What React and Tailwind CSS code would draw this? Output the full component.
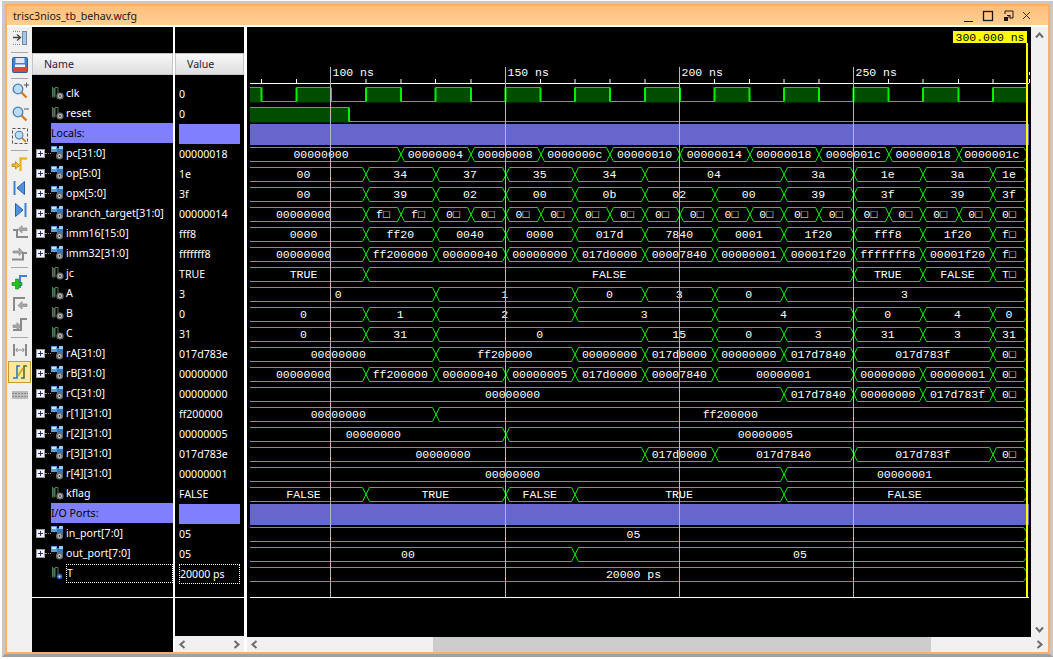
const UI = "font-['Noto_Sans',sans-serif]";
const WF = "font-['Liberation_Mono',monospace] text-[11.5px]";
const r = [296.5, 366, 435.5, 505.5, 575, 645, 714.5, 784, 853.5, 923, 993];
const F = [261.5, 331, 401, 470.5, 540.5, 610, 680, 749.5, 819, 888.5, 958.5];
const END = 1026;

const bt = [366, 401, 436, 471, 505.5, 540.5, 575, 610, 645, 680, 714.5, 749.5, 784, 819, 853.5, 888.5, 923, 958.5, 993, END];
const buses = [
  [147, [["00000000", F[2]], ["00000004", F[3]], ["00000008", F[4]], ["0000000c", F[5]], ["00000010", F[6]], ["00000014", F[7]], ["00000018", F[8]], ["0000001c", F[9]], ["00000018", F[10]], ["0000001c", END]]],
  [167, [["00", r[1]], ["34", r[2]], ["37", r[3]], ["35", r[4]], ["34", r[5]], ["04", r[7]], ["3a", r[8]], ["1e", r[9]], ["3a", r[10]], ["1e", END]]],
  [187, [["00", r[1]], ["39", r[2]], ["02", r[3]], ["00", r[4]], ["0b", r[5]], ["02", r[6]], ["00", r[7]], ["39", r[8]], ["3f", r[9]], ["39", r[10]], ["3f", END]]],
  [207, [["00000000", bt[0]], ...bt.slice(1).map((x, i) => [i < 2 ? "f□" : "0□", x])]],
  [227, [["0000", r[1]], ["ff20", r[2]], ["0040", r[3]], ["0000", r[4]], ["017d", r[5]], ["7840", r[6]], ["0001", r[7]], ["1f20", r[8]], ["fff8", r[9]], ["1f20", r[10]], ["f□", END]]],
  [247, [["00000000", r[1]], ["ff200000", r[2]], ["00000040", r[3]], ["00000000", r[4]], ["017d0000", r[5]], ["00007840", r[6]], ["00000001", r[7]], ["00001f20", r[8]], ["fffffff8", r[9]], ["00001f20", r[10]], ["f□", END]]],
  [267, [["TRUE", r[1]], ["FALSE", r[8]], ["TRUE", r[9]], ["FALSE", r[10]], ["T□", END]]],
  [287, [["0", r[2]], ["1", r[4]], ["0", r[5]], ["3", r[6]], ["0", r[7]], ["3", END]]],
  [307, [["0", r[1]], ["1", r[2]], ["2", r[4]], ["3", r[6]], ["4", r[8]], ["0", r[9]], ["4", r[10]], ["0", END]]],
  [327, [["0", r[1]], ["31", r[2]], ["0", r[5]], ["15", r[6]], ["0", r[7]], ["3", r[8]], ["31", r[9]], ["3", r[10]], ["31", END]]],
  [347, [["00000000", r[2]], ["ff200000", r[4]], ["00000000", r[5]], ["017d0000", r[6]], ["00000000", r[7]], ["017d7840", r[8]], ["017d783f", r[10]], ["0□", END]]],
  [367, [["00000000", r[1]], ["ff200000", r[2]], ["00000040", r[3]], ["00000005", r[4]], ["017d0000", r[5]], ["00007840", r[6]], ["00000001", r[8]], ["00000000", r[9]], ["00000001", r[10]], ["0□", END]]],
  [387, [["00000000", r[7]], ["017d7840", r[8]], ["00000000", r[9]], ["017d783f", r[10]], ["0□", END]]],
  [407, [["00000000", r[2]], ["ff200000", END]]],
  [427, [["00000000", r[3]], ["00000005", END]]],
  [447, [["00000000", r[5]], ["017d0000", r[6]], ["017d7840", r[8]], ["017d783f", r[10]], ["0□", END]]],
  [467, [["00000000", r[7]], ["00000001", END]]],
  [487, [["FALSE", r[1]], ["TRUE", r[3]], ["FALSE", r[4]], ["TRUE", r[7]], ["FALSE", END]]],
  [527, [["05", END]]],
  [547, [["00", r[4]], ["05", END]]],
  [567, [["20000 ps", END]]],
];

function BusRow({ y, segs }) {
  const top = y + 0.5, bot = y + 14.5;
  const lines = [];
  const labels = [];
  let a = 250, labelStart = 242;
  segs.forEach(([t, b], i) => {
    const last = i === segs.length - 1;
    const x0 = i === 0 ? 250 : Math.round(a) + 3.5;
    const x1 = Math.round(b) - 3.5 + (last ? 1 : 0);
    lines.push(`M${x0} ${top}H${x1}M${x0} ${bot}H${x1}`);
    if (last) {
      lines.push(`M${x1} ${top}L${x1 + 3} ${top + 4}V${bot - 4}L${x1} ${bot}`);
    } else {
      const c = Math.round(b);
      lines.push(`M${c - 3.5} ${top}L${c + 3.5} ${bot}M${c - 3.5} ${bot}L${c + 3.5} ${top}`);
    }
    labels.push(
      <text key={i} x={(labelStart + b) / 2 - 0.5} y={y + 11} textAnchor="middle" fill="#ffffff" className={WF}>{t}</text>
    );
    a = b; labelStart = b;
  });
  return (
    <g>
      <path d={lines.join("")} fill="none" stroke="#00e600" strokeWidth="1" />
      {labels}
    </g>
  );
}

function Bit({ hi, lo, edges, startHigh }) {
  const fills = [];
  let high = startHigh, x = 250;
  let h = "", v = "";
  edges.concat([1027]).forEach((e, i) => {
    if (high) fills.push(<rect key={i} x={x} y={hi} width={e - x} height={lo - hi + 1} fill="#004d00" />);
    h += `M${x} ${high ? hi : lo}H${e}`;
    if (e !== 1027) v += `M${e} ${hi}V${lo}`;
    high = !high; x = e;
  });
  return (
    <g>
      {fills}
      <path d={h} fill="none" stroke="#00e600" strokeWidth="1" />
      <path d={v} fill="none" stroke="#00f000" strokeWidth="2" />
    </g>
  );
}

function Wave() {
  const clkEdges = [261.5, 296.5, 331, 366, 401, 435.5, 471, 505.5, 540.5, 575, 610, 645, 680, 714.5, 749.5, 784, 819, 853.5, 888.5, 923, 958.5, 993];
  const ticks = [261.5, 296.5, 366, 401, 435.5, 471, 540.5, 575, 610, 645, 714.5, 749.5, 784, 819, 888.5, 923, 958.5, 993];
  const cursors = [[330.5, "100 ns"], [505.5, "150 ns"], [679.5, "200 ns"], [853.5, "250 ns"]];
  return (
    <svg width="784" height="610" viewBox="247 27 784 610" className="block">
      <rect x="247" y="27" width="784" height="610" fill="#000000" />
      {ticks.map((x) => <path key={x} d={`M${x} 79V83`} stroke="#ffffff" />)}
      <path d="M1029.5 72V75M1029.5 79V83" stroke="#ffffff" />
      <rect x="250" y="83" width="779" height="1" fill="#ffffff" />
      <Bit hi={87.5} lo={101.5} edges={clkEdges} startHigh={true} />
      <Bit hi={107.5} lo={121.5} edges={[349]} startHigh={true} />
      <rect x="250" y="124" width="779" height="21" fill="#6666cc" />
      <rect x="250" y="504" width="779" height="21" fill="#6666cc" />
      {buses.map(([y, segs]) => <BusRow key={y} y={y} segs={segs} />)}
      {cursors.map(([x, t]) => (
        <g key={x}>
          <text x={x + 2} y="75.5" fill="#ffffff" className={WF}>{t}</text>
          <path d={`M${x} 67V597`} stroke="#b8b8b8" />
        </g>
      ))}
      <rect x="250" y="597" width="779" height="1" fill="#ffffff" />
      <rect x="1026" y="43" width="2" height="554" fill="#ffff00" />
      <rect x="953" y="31" width="74" height="12" fill="#ffff00" />
      <text x="990" y="40.5" textAnchor="middle" fill="#000000" className={WF}>300.000 ns</text>
    </svg>
  );
}

const Gear = ({ cx = 9, cy = 10 }) => (
  <g>
    <circle cx={cx} cy={cy} r="3.600" fill="#6e6e6e" />
    <circle cx={cx} cy={cy} r="2" fill="#c8c8c8" />
    <circle cx={cx} cy={cy} r="0.900" fill="#333333" />
  </g>
);

const SignalIcon = ({ t }) => (
  <svg width="13" height="14" viewBox="0 0 13 14" className="shrink-0">
    <path d="M1.500 1v10h2.500M4 11V1.500h3v7" fill="none" stroke="#4f7f4f" strokeWidth="1" />
    <path d="M3 2v8" stroke="#9a9a9a" strokeWidth="1" />
    {t ? (
      <g><circle cx="8.500" cy="10.500" r="2.800" fill="#3566c8" /><circle cx="8.500" cy="10.500" r="1" fill="#e8f0ff" /></g>
    ) : <Gear />}
  </svg>
);

const BusIcon = () => (
  <svg width="13" height="14" viewBox="0 0 13 14" className="shrink-0">
    <rect x="0" y="0" width="6" height="6" fill="#5aa0dc" />
    <rect x="6" y="2" width="6" height="6" fill="#2f78bc" />
    <rect x="1" y="1" width="4" height="2" fill="#cfe6f9" />
    <rect x="8" y="0" width="4" height="3" fill="#9ccaf0" />
    <Gear cx={8.500} cy={10} />
  </svg>
);

const Plus = () => (
  <span className="relative flex h-[9px] w-[9px] shrink-0 items-center justify-center border border-[#9a9a9a] bg-[#f4f4f4]">
    <span className="absolute h-px w-[5px] bg-[#20307a]" />
    <span className="absolute h-[5px] w-px bg-[#20307a]" />
  </span>
);

const rows = [
  { n: "clk", v: "0" }, { n: "reset", v: "0" }, { n: "Locals:", v: "", g: 1 },
  { n: "pc[31:0]", v: "00000018", b: 1 }, { n: "op[5:0]", v: "1e", b: 1 }, { n: "opx[5:0]", v: "3f", b: 1 },
  { n: "branch_target[31:0]", v: "00000014", b: 1 }, { n: "imm16[15:0]", v: "fff8", b: 1 }, { n: "imm32[31:0]", v: "fffffff8", b: 1 },
  { n: "jc", v: "TRUE" }, { n: "A", v: "3" }, { n: "B", v: "0" }, { n: "C", v: "31" },
  { n: "rA[31:0]", v: "017d783e", b: 1 }, { n: "rB[31:0]", v: "00000000", b: 1 }, { n: "rC[31:0]", v: "00000000", b: 1 },
  { n: "r[1][31:0]", v: "ff200000", b: 1 }, { n: "r[2][31:0]", v: "00000005", b: 1 }, { n: "r[3][31:0]", v: "017d783e", b: 1 }, { n: "r[4][31:0]", v: "00000001", b: 1 },
  { n: "kflag", v: "FALSE" }, { n: "I/O Ports:", v: "", g: 1 },
  { n: "in_port[7:0]", v: "05", b: 1 }, { n: "out_port[7:0]", v: "05", b: 1 }, { n: "T", v: "20000 ps", t: 1 },
];

function NameRow({ row }) {
  if (row.g) {
    return (
      <div className="ml-[19px] flex h-[20px] items-center bg-[#8080ff] text-[#000000]">{row.n}</div>
    );
  }
  return (
    <div className="flex h-[20px] items-center text-white">
      <div className="flex w-[19px] items-center pl-[4px]">
        {row.b && <Plus />}
        {row.b && <span className="w-[6px] border-t border-dotted border-[#8a8a8a]" />}
      </div>
      {row.b ? <BusIcon /> : <SignalIcon t={row.t} />}
      <span className={row.t ? "ml-[2px] flex h-[19px] flex-1 items-center border border-dotted border-white" : "ml-[2px] flex-1"}>{row.n}</span>
    </div>
  );
}

function ValueRow({ row }) {
  if (row.g) return <div className="mx-[4px] h-[20px] bg-[#8080ff]" />;
  return (
    <div className={row.t ? "mx-[4px] flex h-[20px] items-center border border-dotted border-white text-white" : "flex h-[20px] items-center pl-[4px] text-white"}>
      {row.v}
    </div>
  );
}

const Chev = ({ d, className }) => (
  <svg width="9" height="9" viewBox="0 0 9 9" className={className}>
    <path d={d} fill="none" stroke="#6a6a6a" strokeWidth="2" />
  </svg>
);
const L = "M6.500 1L2.500 4.500L6.500 8";
const R = "M2.500 1L6.500 4.500L2.500 8";
const U = "M1 6.500L4.500 2.500L8 6.500";
const D = "M1 2.500L4.500 6.500L8 2.500";

const Sep = ({ className }) => <div className={"mx-[4px] h-px bg-[#a8a8a8] " + className} />;

const Tool = ({ children, className }) => (
  <div className={"flex items-center justify-center " + className}>
    <svg width="18" height="18" viewBox="0 0 18 18">{children}</svg>
  </div>
);

const Mag = ({ plus, minus }) => (
  <g>
    <circle cx="7" cy="7" r="4.800" fill="#b8ddf8" stroke="#4a7fb0" strokeWidth="1.300" />
    <path d="M10.500 10.500L15.500 15.500" stroke="#d87a20" strokeWidth="2.400" />
    {plus && <path d="M13 3H18M15.500 0.500V5.500" stroke="#555555" strokeWidth="1" />}
    {minus && <path d="M13 4H18" stroke="#555555" strokeWidth="1" />}
  </g>
);

function Toolbar() {
  return (
    <div className="flex w-[25px] shrink-0 flex-col bg-[#f0f0f0]">
      <Tool className="h-[22px]">
        <path d="M2 8.500H9M6 5.500L9.500 8.500L6 11.500" fill="none" stroke="#444444" strokeWidth="1.300" />
        <rect x="11.500" y="2.500" width="4" height="13" fill="#a8c8e8" stroke="#6d8aa8" />
        <path d="M2 2.500H10M2 15.500H10" stroke="#888888" strokeDasharray="1 1" />
      </Tool>
      <Sep className="mt-[3px]" />
      <Tool className="h-[22px] mt-[1px]">
        <rect x="1.500" y="1.500" width="15" height="15" rx="1" fill="#3f82cf" stroke="#2a5f9e" />
        <rect x="4.500" y="2" width="9" height="5" fill="#d8e8f8" />
        <rect x="2" y="11" width="14" height="5" fill="#d84a3a" />
        <rect x="4" y="8.500" width="10" height="2.500" fill="#f4f4f4" />
      </Tool>
      <Sep className="mt-[2px]" />
      <Tool className="h-[22px] mt-[1px]"><Mag plus /></Tool>
      <Tool className="h-[22px] mt-[1px]"><Mag minus /></Tool>
      <Tool className="h-[22px]">
        <rect x="1.500" y="1.500" width="15" height="15" fill="#eeeeee" stroke="#555555" strokeDasharray="3 2" />
        <g transform="translate(2.500 2.500) scale(.8)"><Mag /></g>
      </Tool>
      <Sep className="mt-[3px]" />
      <Tool className="h-[22px] mt-[2px]">
        <path d="M9.500 16V3.500H16" fill="none" stroke="#e8b820" strokeWidth="2.400" />
        <path d="M1 9H4.500V6.500L8.500 10.500L4.500 14V11.500H1Z" fill="#f0c020" stroke="#a07a10" strokeWidth=".7" />
      </Tool>
      <Tool className="h-[22px] mt-[2px]">
        <path d="M3.500 2V16" stroke="#3f82cf" strokeWidth="2" />
        <path d="M13.500 2.500L6 9L13.500 15.500Z" fill="#4f92df" stroke="#2a5f9e" />
      </Tool>
      <Tool className="h-[22px]">
        <path d="M14.500 2V16" stroke="#3f82cf" strokeWidth="2" />
        <path d="M4.500 2.500L12 9L4.500 15.500Z" fill="#4f92df" stroke="#2a5f9e" />
      </Tool>
      <Tool className="h-[22px]">
        <path d="M2 7H6V14H17" fill="none" stroke="#8a8a8a" strokeWidth="2" />
        <path d="M16 5H11V2.500L7 6.500L11 10V7.500H16Z" fill="#a8a8a8" stroke="#808080" strokeWidth=".6" />
      </Tool>
      <Tool className="h-[22px]">
        <path d="M1 14.500H12V8H16" fill="none" stroke="#8a8a8a" strokeWidth="2" />
        <path d="M2 6H8V3L12 7L8 10.500V8H2Z" fill="#a8a8a8" stroke="#808080" strokeWidth=".6" />
      </Tool>
      <Sep className="mt-[2px]" />
      <Tool className="h-[22px] mt-[3px]">
        <path d="M9 15V3H16" fill="none" stroke="#3f82cf" strokeWidth="2" />
        <path d="M1 9.500H4.500V6H7.500V9.500H11V12.500H7.500V16H4.500V12.500H1Z" fill="#22c020" stroke="#108010" strokeWidth=".6" />
      </Tool>
      <Tool className="h-[21px]">
        <path d="M3 16V3H14" fill="none" stroke="#8a8a8a" strokeWidth="2" />
        <path d="M16 9H11V6.500L7 10.500L11 14V11.500H16Z" fill="#a8a8a8" stroke="#808080" strokeWidth=".6" />
      </Tool>
      <Tool className="h-[22px]">
        <path d="M2 14H10V3H16" fill="none" stroke="#8a8a8a" strokeWidth="2" />
        <path d="M2 9H6V6.500L10 10.500L6 14V11.500H2Z" fill="#a8a8a8" stroke="#808080" strokeWidth=".6" />
      </Tool>
      <Sep className="mt-[1px]" />
      <Tool className="h-[22px] mt-[1px]">
        <path d="M3 3V15M15 3V15" stroke="#8a8a8a" strokeWidth="2" />
        <path d="M5 9H13M6.500 7L4.800 9L6.500 11M11.500 7L13.200 9L11.500 11" fill="none" stroke="#8a8a8a" />
      </Tool>
      <div className="mx-[1px] flex h-[22px] items-center justify-center border border-[#c89a30] bg-[#ffe9a0]">
        <svg width="18" height="18" viewBox="0 0 18 18">
          <path d="M2 15H6V3H9" fill="none" stroke="#2f78bc" strokeWidth="1.600" />
          <path d="M10 15H13V3H16" fill="none" stroke="#5a6a20" strokeWidth="1.600" />
          <path d="M7 13L12 5" stroke="#d8a020" strokeWidth="1.600" />
        </svg>
      </div>
      <Tool className="h-[22px] mt-[1px]">
        <rect x="1" y="5" width="16" height="8" fill="#bcbcbc" />
        <path d="M1 7.500H17M1 10.500H17" stroke="#8a8a8a" strokeDasharray="2 1" />
      </Tool>
    </div>
  );
}

const Header = ({ children, className }) => (
  <div className={"flex h-[22px] items-center border border-[#c4c4c4] bg-gradient-to-b from-[#f8f8f8] to-[#dedede] text-[#1c2440] " + className}>
    {children}
  </div>
);

export default function App() {
  return (
    <div className={"h-[659px] w-[1053px] bg-white pb-[2px] pl-[2px] pt-[1px] text-[10.6px] leading-none " + UI}>
      <div className="h-full border-[3px] border-[#c8c8c8] border-b-[#a0a0a0]">
        <div className="flex h-full flex-col border-2 border-[#ffb062] bg-white">
          <div className="flex h-[19px] items-center bg-gradient-to-b from-[#ffbe7c] to-[#ffd092] pl-[6px] text-[#1a1a1a]">
            <span className="flex-1 pt-[2px]">trisc3nios_tb_behav.wcfg</span>
            <svg width="76" height="14" viewBox="-4 0 76 14" className="mr-[8px]">
              <path d="M-4 12.500H5" stroke="#1a1a1a" strokeWidth="1" />
              <rect x="15.500" y="2.500" width="9" height="9" fill="none" stroke="#1a1a1a" strokeWidth="1.300" />
              <path d="M37 5V2H45V9H42M37 11.500L42 6.500M39 6.500H42V9.500" fill="none" stroke="#1a1a1a" />
              <rect x="36" y="8" width="4" height="4" fill="#1a1a1a" />
              <path d="M55 3L62 10M62 3L55 10" stroke="#333333" />
            </svg>
          </div>
          <div className="h-[2px] bg-white" />
          <div className="flex h-[625px]">
            <Toolbar />
            <div className="flex w-[141px] shrink-0 flex-col bg-black">
              <div className="h-[26px]" />
              <Header className="pl-[11px]">Name</Header>
              <div className="h-[8px]" />
              {rows.map((row) => <NameRow key={row.n} row={row} />)}
              <div className="mt-[14px] h-px bg-white" />
            </div>
            <div className="w-[2px] shrink-0 bg-white" />
            <div className="flex w-[69px] shrink-0 flex-col bg-black">
              <div className="h-[26px]" />
              <Header className="pl-[11px]">Value</Header>
              <div className="h-[9px]" />
              {rows.map((row) => <ValueRow key={row.n} row={row} />)}
              <div className="mt-[13px] h-px bg-white" />
              <div className="flex-1" />
              <div className="flex h-[16px] items-center justify-between bg-[#f0f0f0] px-[3px]">
                <Chev d={L} /><Chev d={R} />
              </div>
            </div>
            <div className="w-[3px] shrink-0 bg-white" />
            <div className="flex w-[784px] shrink-0 flex-col">
              <Wave />
              <div className="flex h-[15px] bg-[#f0f0f0]">
                <div className="flex w-[186px] items-center pl-[3px]"><Chev d={L} /></div>
                <div className="w-[498px] bg-[#cccccc]" />
              </div>
            </div>
            <div className="flex w-[17px] shrink-0 flex-col items-center bg-[#f0f0f0] pb-[3px] pt-[4px]">
              <Chev d={U} />
              <div className="flex-1" />
              <Chev d={D} className="mb-[6px]" />
              <Chev d={R} />
            </div>
          </div>
        </div>
      </div>
    </div>
  );
}
